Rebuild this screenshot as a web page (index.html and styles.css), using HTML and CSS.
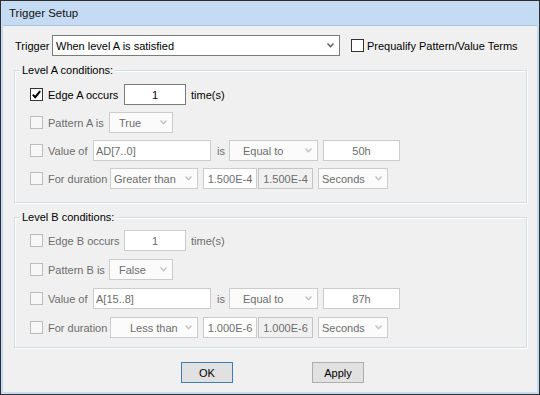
FILE: index.html
```html
<!DOCTYPE html>
<html>
<head>
    <title>Trigger Setup</title>
    <link rel="stylesheet" href="styles.css">
</head>
<body>
    <div class="window">
        <div class="titlebar">Trigger Setup</div>
        <div class="client">
            <div class="top-row">
                <span class="top-label">Trigger</span>
                <div class="combo trigger">
                    <span>When level A is satisfied</span>
                    <svg viewBox="0 0 7 5"><polyline points="0.5,0.5 3.5,3.8 6.5,0.5"/></svg>
                </div>
                <div class="check prequal"><span class="box"></span>Prequalify Pattern/Value Terms</div>
            </div>

            <fieldset class="group group-a">
                <legend>Level A conditions:</legend>
                <div class="rows">
                    <div class="row">
                        <span class="box checked"><svg viewBox="0 0 11 11"><polyline points="1.8,5.6 4.2,8.2 9.2,2.2"/></svg></span>
                        <span class="lbl w-edge">Edge A occurs</span>
                        <input class="edit count" type="text" value="1">
                        <span class="unit">time(s)</span>
                    </div>
                    <div class="row off">
                        <span class="box"></span>
                        <span class="lbl w-pattern">Pattern A is</span>
                        <div class="combo pattern"><span>True</span><svg viewBox="0 0 7 5"><polyline points="0.5,0.5 3.5,3.8 6.5,0.5"/></svg></div>
                    </div>
                    <div class="row off">
                        <span class="box"></span>
                        <span class="lbl w-value">Value of</span>
                        <input class="edit signal" type="text" value="AD[7..0]" disabled>
                        <span class="lbl w-is">is</span>
                        <div class="combo op"><span>Equal to</span><svg viewBox="0 0 7 5"><polyline points="0.5,0.5 3.5,3.8 6.5,0.5"/></svg></div>
                        <input class="edit hex" type="text" value="50h" disabled>
                    </div>
                    <div class="row off">
                        <span class="box"></span>
                        <span class="lbl w-dur">For duration</span>
                        <div class="combo dur dur-gt"><span>Greater than</span><svg viewBox="0 0 7 5"><polyline points="0.5,0.5 3.5,3.8 6.5,0.5"/></svg></div>
                        <input class="edit time" type="text" value="1.500E-4" disabled>
                        <input class="edit time time-2" type="text" value="1.500E-4" disabled>
                        <div class="combo unit-sel"><span>Seconds</span><svg viewBox="0 0 7 5"><polyline points="0.5,0.5 3.5,3.8 6.5,0.5"/></svg></div>
                    </div>
                </div>
            </fieldset>

            <fieldset class="group group-b">
                <legend>Level B conditions:</legend>
                <div class="rows">
                    <div class="row off">
                        <span class="box"></span>
                        <span class="lbl w-edge">Edge B occurs</span>
                        <input class="edit count" type="text" value="1" disabled>
                        <span class="unit">time(s)</span>
                    </div>
                    <div class="row off">
                        <span class="box"></span>
                        <span class="lbl w-pattern">Pattern B is</span>
                        <div class="combo pattern"><span>False</span><svg viewBox="0 0 7 5"><polyline points="0.5,0.5 3.5,3.8 6.5,0.5"/></svg></div>
                    </div>
                    <div class="row off">
                        <span class="box"></span>
                        <span class="lbl w-value">Value of</span>
                        <input class="edit signal" type="text" value="A[15..8]" disabled>
                        <span class="lbl w-is">is</span>
                        <div class="combo op"><span>Equal to</span><svg viewBox="0 0 7 5"><polyline points="0.5,0.5 3.5,3.8 6.5,0.5"/></svg></div>
                        <input class="edit hex" type="text" value="87h" disabled>
                    </div>
                    <div class="row off">
                        <span class="box"></span>
                        <span class="lbl w-dur">For duration</span>
                        <div class="combo dur dur-lt"><span>Less than</span><svg viewBox="0 0 7 5"><polyline points="0.5,0.5 3.5,3.8 6.5,0.5"/></svg></div>
                        <input class="edit time" type="text" value="1.000E-6" disabled>
                        <input class="edit time time-2" type="text" value="1.000E-6" disabled>
                        <div class="combo unit-sel"><span>Seconds</span><svg viewBox="0 0 7 5"><polyline points="0.5,0.5 3.5,3.8 6.5,0.5"/></svg></div>
                    </div>
                </div>
            </fieldset>

            <div class="buttons">
                <button class="btn default">OK</button>
                <button class="btn">Apply</button>
            </div>
        </div>
    </div>
</body>
</html>
```

FILE: styles.css
```css
body { margin: 0; font-family: "Liberation Sans", Arial, sans-serif; font-size: 11px; color: #000; }

/* window frame */
.window { width: 540px; height: 395px; box-sizing: border-box; border: 1px solid #2e2e2e; background: #c4dbf3; display: flex; flex-direction: column; }
.titlebar { flex: none; height: 24px; line-height: 25px; padding-left: 8px; font-size: 11.5px; color: #111; }
.client { flex: 1; margin: 0 2px 2px; background: #f0f0f0; border-top: 1px solid #a9c1dc; padding: 9px 0 0 11px; }

/* top line */
.top-row { display: flex; align-items: center; height: 21px; }
.top-label { width: 37px; margin-left: 1px; }
.check { display: flex; align-items: center; }
.prequal { margin-left: 11px; }
.prequal .box { margin-right: 3px; }

/* controls */
.box { flex: none; width: 13px; height: 13px; box-sizing: border-box; border: 1px solid #333; background: #fff; display: flex; }
.box svg { width: 11px; height: 11px; fill: none; stroke: #000; stroke-width: 2; }
.combo { flex: none; display: flex; align-items: center; box-sizing: border-box; height: 21px; border: 1px solid #7a7a7a; background: #fff; padding-left: 3px; }
.combo span { flex: 1; white-space: nowrap; }
.combo svg { flex: none; width: 7px; height: 5px; margin-right: 5px; fill: none; stroke: #5a5a5a; stroke-width: 1.4; }
.edit { flex: none; box-sizing: border-box; height: 21px; margin: 0; border: 1px solid #7a7a7a; background: #fff; font: inherit; color: #000; padding: 0 2px; outline: none; }

.trigger { width: 288px; }
.pattern { width: 64px; padding-left: 9px; }
.op { width: 89px; padding-left: 13px; }
.dur { width: 88px; }
.dur-gt { padding-left: 3px; }
.dur-lt { padding-left: 19px; }
.unit-sel { width: 70px; margin-left: 5px; }
.count { width: 62px; text-align: center; }
.signal { width: 118px; }
.hex { width: 77px; margin-left: 5px; text-align: center; }
.time { width: 54px; margin-left: 5px; text-align: center; padding: 0; }
.time-2 { width: 55px; margin-left: 1px; }
.unit { margin-left: 5px; }

/* group boxes */
.group { width: 513px; box-sizing: border-box; margin: 8px 0 0; min-width: 0; border: 1px solid #d3dde4; box-shadow: inset 1px 1px 0 #fff, 1px 1px 0 #fff; }
.group legend { margin-left: -10px; padding: 0 2px; line-height: 13px; background: #f0f0f0; }
.group-a { padding: 7px 14px 13px 15px; }
.group-b { padding: 6px 14px 9px 15px; }
.rows { display: flex; flex-direction: column; gap: 7px; }
.group-b .rows { gap: 8px; }
.row { display: flex; align-items: center; height: 21px; }
.row .box { margin-right: 5px; }
.lbl { flex: none; white-space: nowrap; }
.w-edge { width: 76px; }
.w-pattern { width: 61px; }
.w-value { width: 45px; }
.w-dur { width: 62px; }
.w-is { width: 12px; padding-left: 6px; }

/* disabled rows */
.off { color: #6d6d6d; }
.off .box { border-color: #bcbcbc; background: #f7f7f7; }
.off .combo { border-color: #cccccc; background: #fbfbfb; }
.off .combo svg { stroke: #c2c2c2; }
.off .edit { border-color: #cccccc; background: #fff; color: #6d6d6d; }
.off .time-2 { background: #f0f0f0; border-color: #c4c4c4; }

/* buttons */
.buttons { display: flex; gap: 79px; margin: 14px 0 0 167px; }
.btn { width: 52px; height: 21px; box-sizing: border-box; padding: 0; border: 1px solid #adadad; background: #e1e1e1; font: inherit; color: #000; }
.btn.default { border-color: #3c7fb1; }
```
